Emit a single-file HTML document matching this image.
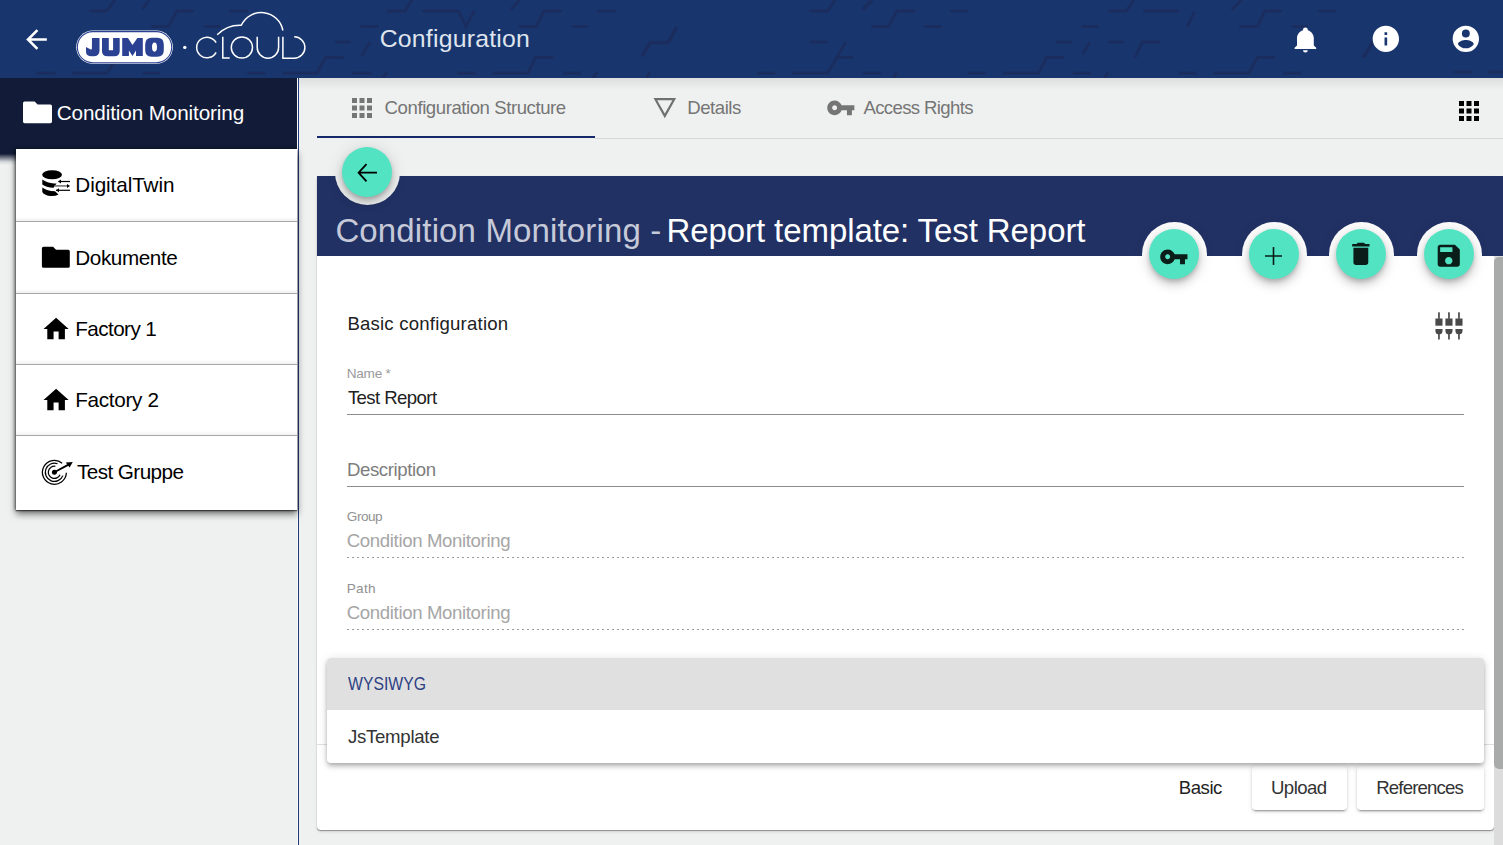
<!DOCTYPE html>
<html><head><meta charset="utf-8">
<style>
*{box-sizing:border-box}
html,body{margin:0;padding:0}
body{width:1503px;height:845px;overflow:hidden;position:relative;background:#eff1f0;font-family:"Liberation Sans",sans-serif}
.a{position:absolute}
.t{position:absolute;white-space:nowrap;line-height:1}
svg{display:block}
.fab{position:absolute;width:50px;height:50px;border-radius:50%;background:#52e3c2;box-shadow:0 3px 5px -1px rgba(0,0,0,.2),0 6px 10px 0 rgba(0,0,0,.14),0 1px 18px 0 rgba(0,0,0,.12)}
.halo{position:absolute;width:65px;height:65px;border-radius:50%;background:#fff}
</style></head><body>
<div class="a" style="left:0;top:0;width:1503px;height:78px;background:#18366d;overflow:hidden">
<svg class="a" style="left:0;top:0" width="1503" height="78"><g fill="none" stroke="#1b2d5e" stroke-width="2.8" stroke-linejoin="miter"><polyline points="89.5,11 106.5,11 115,0"/><polyline points="142.7,9 149,0"/><polyline points="151,26.5 168.5,26.5 177,11 194,11"/><polyline points="36.2,73 55.4,73"/><polyline points="72.4,73 106.5,73 113,64"/><polyline points="142.7,73 160,73"/><polyline points="229.2,11 247.3,11"/><polyline points="203.7,26.5 220.7,26.5"/><polyline points="247.3,73 265.4,73"/><polyline points="282.5,73 317,73 325.5,57.5 343.5,57.5"/><polyline points="387,11 405.2,11 411.6,0"/><polyline points="422.2,11 458.4,11 465.9,26.5 474.4,10.6"/><polyline points="360.5,26.5 378.6,26.5"/><polyline points="335,42 350.9,42"/><polyline points="370,42.6 361.5,55.4"/><polyline points="352,73 371.1,73"/><polyline points="382.8,78 387,72.4"/><polyline points="457.4,73 475.5,73"/><polyline points="510.9,9.6 519.4,0"/><polyline points="518.9,26.5 536.4,26.5 543.9,11 562,11"/><polyline points="571.6,26.5 588.6,26.5"/><polyline points="597.1,11 615.3,11"/><polyline points="492.8,73 527.9,73 535.4,57.5 553.5,57.5"/><polyline points="563,73 581.2,73"/><polyline points="592.9,78 597.1,72.4"/><polyline points="642.1,56.4 650.1,42.6 668.2,42.6 676.7,27.2" stroke-width="3.5"/><polyline points="649.6,72.4 646.4,78"/><polyline points="757.1,73 775.2,73"/><polyline points="792.3,73 827.7,73 845.8,42"/><polyline points="809.6,11 827.7,11 835.1,0"/><polyline points="862.8,9.6 872.4,0" stroke-width="3.5"/><polyline points="871.4,26.5 888.4,26.5 896.9,11 915,11"/><polyline points="923.5,26.5 941.6,26.5"/><polyline points="950.2,11 967.5,11"/><polyline points="809.6,42 827.7,42"/><polyline points="837.3,57.5 853.2,57.5"/><polyline points="862.8,73 880.9,73"/><polyline points="893.7,78 896.9,72.4"/><polyline points="1108,11 1126.4,11 1133.8,0"/><polyline points="1081.4,26.5 1098.4,26.5"/><polyline points="1089.9,42.6 1082.5,54.3"/><polyline points="1055.8,42 1071.8,42"/><polyline points="1108,42 1124,42"/><polyline points="1002.6,73 1038.8,73 1046.3,57.5 1064.4,57.5"/><polyline points="967.5,73 985.6,73"/><polyline points="1072.9,73 1091,73"/><polyline points="1108,72.4 1104.8,78"/><polyline points="1143.4,11 1178.6,11"/><polyline points="1194.5,11.7 1187.1,26.6"/><polyline points="1241.4,0 1231.8,9.6"/><polyline points="1239.3,26.5 1257.4,26.5 1264.8,11 1282,11"/><polyline points="1160.5,42 1142.4,42 1134.9,57.5"/><polyline points="1213.7,73 1248.9,73 1257.4,57.5 1274.4,57.5"/><polyline points="1178.6,73 1196.7,73"/><polyline points="1318.3,11 1335.4,11"/><polyline points="1291.7,26.5 1307.7,26.5"/><polyline points="1373.7,40.5 1363.1,57.5" stroke-width="3.5"/><polyline points="1283.2,73 1301.3,73"/><polyline points="1453.6,72 1472,72"/><polyline points="1488.6,72 1503,72"/></g></svg>
</div>
<svg class="a" style="left:20.5px;top:23.7px" width="31" height="31" viewBox="0 0 24 24"><path fill="#fff" d="M20 11H7.83l5.59-5.59L12 4l-8 8 8 8 1.41-1.41L7.83 13H20v-2z" /></svg>
<svg class="a" style="left:0;top:0" width="320" height="78" viewBox="0 0 320 78">
<rect x="76.2" y="30.5" width="96.7" height="33.3" rx="16.65" fill="#fff"/>
<rect x="77.35" y="31.6" width="94.4" height="31.1" rx="15.55" fill="#fff" stroke="#2b4192" stroke-width="1.1"/>
<g fill="#2b4192">
<path d="M92,38 H99.5 V50.5 Q99.5,56.3 93.5,56.3 H91.5 Q86,56.3 86,51.5 V46.9 L90.2,49.3 Q91.9,50 91.9,48.5 Z"/>
<path d="M102,38 H108.8 V50.2 H113.1 V38 H119.7 V51.2 Q119.7,56.3 114.2,56.3 H107.5 Q102,56.3 102,51.2 Z"/>
<path d="M122.2,38 H128 L132.5,45 L137.4,38 H142.8 V55.9 H136 V50.6 L132.5,55.9 L128.9,50.6 V55.9 H122.2 Z"/>
<path fill-rule="evenodd" d="M151.7,37.8 H157.3 Q163.8,37.8 163.8,44.3 V50.2 Q163.8,56.7 157.3,56.7 H151.7 Q145.2,56.7 145.2,50.2 V44.3 Q145.2,37.8 151.7,37.8 Z M154.5,42.5 Q152,42.5 152,47.1 Q152,51.7 154.5,51.7 Q157,51.7 157,47.1 Q157,42.5 154.5,42.5 Z"/>
</g>
<circle cx="184.8" cy="47.4" r="1.7" fill="#fff"/>
<g fill="none" stroke="#fff" stroke-width="1.5">
<path d="M216.1,42.7 A10.3,10.3 0 1 0 216.1,52.3"/>
<path d="M222.8,36.8 V58 H229.7"/>
<circle cx="241.9" cy="47.5" r="10.6"/>
<path d="M257.2,36.8 V47.5 A10.7,10.7 0 0 0 278.6,47.5 V36.8"/>
<path d="M282.9,36.8 V58.2 H294.2 A10.7,10.7 0 0 0 294.2,36.8"/>
<path d="M217.2,34.8 A32,32 0 0 1 241.3,25.3 A22,22 0 0 1 282.9,30.5"/>
</g>
</svg>
<div class="t" style="left:379.7px;top:26.9px;font-size:24.8px;letter-spacing:0.225px;color:#dfe4ee;">Configuration</div>
<svg class="a" style="left:1291.3px;top:24.5px" width="28.8" height="28.8" viewBox="0 0 24 24"><path fill="#fff" d="M21,19V20H3V19L5,17V11C5,7.9 7.03,5.17 10,4.29C10,4.19 10,4.1 10,4A2,2 0 0,1 12,2A2,2 0 0,1 14,4C14,4.1 14,4.19 14,4.29C16.97,5.17 19,7.9 19,11V17L21,19M14,21A2,2 0 0,1 12,23A2,2 0 0,1 10,21" /></svg>
<svg class="a" style="left:1370.2px;top:23.4px" width="31.7" height="31.7" viewBox="0 0 24 24"><path fill="#fff" d="M12 2C6.48 2 2 6.48 2 12s4.48 10 10 10 10-4.48 10-10S17.52 2 12 2zm1 15h-2v-6h2v6zm0-8h-2V7h2v2z" /></svg>
<svg class="a" style="left:1450.3px;top:23.4px" width="31.7" height="31.7" viewBox="0 0 24 24"><path fill="#fff" d="M12,19.2C9.5,19.2 7.29,17.92 6,16C6.03,14 10,12.9 12,12.9C14,12.9 17.97,14 18,16C16.71,17.92 14.5,19.2 12,19.2M12,5A3,3 0 0,1 15,8A3,3 0 0,1 12,11A3,3 0 0,1 9,8A3,3 0 0,1 12,5M12,2A10,10 0 0,0 2,12A10,10 0 0,0 12,22A10,10 0 0,0 22,12C22,6.47 17.5,2 12,2Z" /></svg>
<div class="a" style="left:299px;top:78px;width:1204px;height:12px;background:linear-gradient(rgba(0,0,0,.08),rgba(0,0,0,0))"></div>
<div class="a" style="left:298px;top:78px;width:1px;height:767px;background:#223a78"></div>
<div class="a" style="left:297px;top:78px;width:1px;height:767px;background:#fafafa"></div>
<div class="a" style="left:0;top:78px;width:297px;height:71px;background:#121c38;"></div>
<div class="a" style="left:0;top:149px;width:297px;height:16px;background:linear-gradient(#121c38 0,#131d39 30%,rgba(18,28,56,.55) 55%,rgba(18,28,56,.12) 80%,rgba(18,28,56,0) 100%)"></div>
<svg class="a" style="left:0;top:0;overflow:visible" width="1" height="1"><path fill="#fff" d="M24.6,101.5 H34.6 L37.638000000000005,104.538 H50.4 Q52,104.538 52,106.13799999999999 V121.60000000000001 Q52,123.2 50.4,123.2 H24.6 Q23,123.2 23,121.60000000000001 V103.1 Q23,101.5 24.6,101.5 Z"/></svg>
<div class="t" style="left:56.8px;top:103.0px;font-size:20.7px;letter-spacing:-0.126px;color:#fff;">Condition Monitoring</div>
<div class="a" style="left:16px;top:149px;width:281px;height:361px;background:#fff;box-shadow:0 1px 1px rgba(0,0,0,.45),0 4px 7px rgba(0,0,0,.55),-1px 0 3px rgba(0,0,0,.5)"></div>
<div class="a" style="left:16px;top:217px;width:281px;height:4px;background:linear-gradient(rgba(0,0,0,0),rgba(0,0,0,.06))"></div>
<div class="a" style="left:16px;top:221px;width:281px;height:1px;background:#a8a8a8"></div>
<div class="a" style="left:16px;top:289px;width:281px;height:4px;background:linear-gradient(rgba(0,0,0,0),rgba(0,0,0,.06))"></div>
<div class="a" style="left:16px;top:293px;width:281px;height:1px;background:#a8a8a8"></div>
<div class="a" style="left:16px;top:360px;width:281px;height:4px;background:linear-gradient(rgba(0,0,0,0),rgba(0,0,0,.06))"></div>
<div class="a" style="left:16px;top:364px;width:281px;height:1px;background:#a8a8a8"></div>
<div class="a" style="left:16px;top:431px;width:281px;height:4px;background:linear-gradient(rgba(0,0,0,0),rgba(0,0,0,.06))"></div>
<div class="a" style="left:16px;top:435px;width:281px;height:1px;background:#a8a8a8"></div>
<svg class="a" style="left:0;top:0;overflow:visible" width="1" height="1">
<ellipse cx="52.1" cy="174.7" rx="9.9" ry="4.5" fill="#000"/>
<path d="M42.3,179.5 Q47,183 54,183.6 L56.5,183.6 L53.5,187.8 Q46,187.5 42.3,184.5 Z" fill="#000"/>
<path d="M42.3,187.5 Q47,191 55,191.2 L58.5,194.5 Q55,196.5 50,196 Q44,195 42.3,192 Z" fill="#000"/>
<g stroke="#000" stroke-width="1.2" fill="none"><path d="M58.5,181.5 H70"/><path d="M56,190.3 H70"/></g>
<path d="M54.5,185.9 H67" stroke="#777" stroke-width="1.6"/>
<path d="M58,181.5 l3,-2 v4 z M56,190.3 l3,-2 v4 z M70,185.9 l-3,-2 v4 z" fill="#000"/>
</svg>
<div class="t" style="left:75.3px;top:174.7px;font-size:20.7px;letter-spacing:-0.09px;color:#000;">DigitalTwin</div>
<svg class="a" style="left:0;top:0;overflow:visible" width="1" height="1"><path fill="#000" d="M43.5,246.7 H53.06 L56.014,249.654 H68.2 Q69.8,249.654 69.8,251.254 V266.2 Q69.8,267.8 68.2,267.8 H43.5 Q41.9,267.8 41.9,266.2 V248.29999999999998 Q41.9,246.7 43.5,246.7 Z"/></svg>
<div class="t" style="left:75.3px;top:248.0px;font-size:20.7px;letter-spacing:-0.412px;color:#000;">Dokumente</div>
<svg class="a" style="left:40.8px;top:314.1px" width="30.2" height="30.2" viewBox="0 0 24 24"><path fill="#000" d="M10 20v-6h4v6h5v-8h3L12 3 2 12h3v8z" /></svg>
<div class="t" style="left:75.3px;top:319.0px;font-size:20.7px;letter-spacing:-0.588px;color:#000;">Factory 1</div>
<svg class="a" style="left:40.8px;top:385.2px" width="30.2" height="30.2" viewBox="0 0 24 24"><path fill="#000" d="M10 20v-6h4v6h5v-8h3L12 3 2 12h3v8z" /></svg>
<div class="t" style="left:75.3px;top:389.9px;font-size:20.7px;letter-spacing:-0.312px;color:#000;">Factory 2</div>
<svg class="a" style="left:0;top:0;overflow:visible" width="1" height="1">
<g fill="none" stroke="#000" stroke-width="1.25">
<path d="M62.18,463.16 A12.0,12.0 0 1 0 66.39,472.83"/>
<path d="M57.55,463.76 A9.1,9.1 0 1 0 62.88,475.61"/>
<path d="M55.39,466.28 A6.1,6.1 0 1 0 60.01,474.69"/>
</g>
<circle cx="54.4" cy="472.3" r="2.5" fill="#000"/>
<path d="M54.4,472.3 L68.5,464.6" stroke="#000" stroke-width="1.8"/>
<path d="M72.8,462 L65.8,462.4 L69.6,467.4 Z" fill="#000"/>
</svg>
<div class="t" style="left:77.0px;top:461.6px;font-size:20.7px;letter-spacing:-0.57px;color:#000;">Test Gruppe</div>
<div class="a" style="left:595px;top:138px;width:908px;height:1px;background:#d5d8d8"></div>
<div class="a" style="left:317px;top:136px;width:278px;height:2px;background:#14286a"></div>
<svg class="a" style="left:347px;top:93px" width="30" height="30" viewBox="0 0 24 24"><path fill="#757575" d="M4 8h4V4H4v4zm6 12h4v-4h-4v4zm-6 0h4v-4H4v4zm0-6h4v-4H4v4zm6 0h4v-4h-4v4zm6-10v4h4V4h-4zm-6 4h4V4h-4v4zm6 6h4v-4h-4v4zm0 6h4v-4h-4v4z" /></svg>
<div class="t" style="left:384.6px;top:99.0px;font-size:18.6px;letter-spacing:-0.436px;color:#757575;">Configuration Structure</div>
<svg class="a" style="left:0;top:0;overflow:visible" width="1" height="1"><path d="M655.4,99.2 H674.2 L664.8,115.9 Z" fill="none" stroke="#707070" stroke-width="2.2" stroke-linejoin="miter"/></svg>
<div class="t" style="left:687.3px;top:99.0px;font-size:18.6px;letter-spacing:-0.483px;color:#757575;">Details</div>
<svg class="a" style="left:825.7px;top:93.3px" width="29.6" height="29.6" viewBox="0 0 24 24"><path fill="#757575" d="M12.65 10C11.83 7.67 9.61 6 7 6c-3.31 0-6 2.69-6 6s2.69 6 6 6c2.61 0 4.83-1.67 5.65-4H17v4h4v-4h2v-4H12.65zM7 14c-1.1 0-2-.9-2-2s.9-2 2-2 2 .9 2 2-.9 2-2 2z" /></svg>
<div class="t" style="left:863.4px;top:99.1px;font-size:18.6px;letter-spacing:-0.633px;color:#757575;">Access Rights</div>
<svg class="a" style="left:1453.6px;top:96px" width="30" height="30" viewBox="0 0 24 24"><path fill="#000" d="M4 8h4V4H4v4zm6 12h4v-4h-4v4zm-6 0h4v-4H4v4zm0-6h4v-4H4v4zm6 0h4v-4h-4v4zm6-10v4h4V4h-4zm-6 4h4V4h-4v4zm6 6h4v-4h-4v4zm0 6h4v-4h-4v4z" /></svg>
<div class="a" style="left:317px;top:176px;width:1177px;height:654px;background:#fff;border-radius:0 0 4px 4px;box-shadow:0 1.5px 1px -0.5px rgba(0,0,0,.35),0 2px 4px -1px rgba(0,0,0,.14),0 0 1px rgba(0,0,0,.08)"></div>
<div class="a" style="left:317px;top:176px;width:1186px;height:80px;background:#213164"></div>
<div class="t" style="left:335.4px;top:213.7px;font-size:33px;letter-spacing:0.143px;color:#c6cad8;">Condition Monitoring -</div>
<div class="t" style="left:666.5px;top:213.9px;font-size:33px;letter-spacing:-0.085px;color:#fff;">Report template: Test Report</div>
<div class="halo" style="left:334.5px;top:139.5px;background:#eff1f0"></div>
<div class="fab" style="left:342px;top:147px"></div>
<svg class="a" style="left:0;top:0;overflow:visible" width="1" height="1"><path d="M377,172.7 H359.5 M366.5,164.2 L358.6,172.7 L366.5,181.3" fill="none" stroke="#000" stroke-width="1.8"/></svg>
<div class="halo" style="left:1141.5px;top:221.5px"></div>
<div class="halo" style="left:1241.5px;top:221.5px"></div>
<div class="halo" style="left:1328.5px;top:221.5px"></div>
<div class="halo" style="left:1416.5px;top:221.5px"></div>
<div class="fab" style="left:1149px;top:229px"></div>
<div class="fab" style="left:1249px;top:229px"></div>
<div class="fab" style="left:1336px;top:229px"></div>
<div class="fab" style="left:1424px;top:229px"></div>
<svg class="a" style="left:1158.8px;top:241.5px" width="29.7" height="29.7" viewBox="0 0 24 24"><path fill="#0b1d18" d="M12.65 10C11.83 7.67 9.61 6 7 6c-3.31 0-6 2.69-6 6s2.69 6 6 6c2.61 0 4.83-1.67 5.65-4H17v4h4v-4h2v-4H12.65zM7 14c-1.1 0-2-.9-2-2s.9-2 2-2 2 .9 2 2-.9 2-2 2z" /></svg>
<svg class="a" style="left:0;top:0;overflow:visible" width="1" height="1"><path d="M1265,256 H1282 M1273.5,247 V265" stroke="#0b1d18" stroke-width="1.6"/></svg>
<svg class="a" style="left:1346px;top:239.3px" width="29.7" height="29.7" viewBox="0 0 24 24"><path fill="#0b1d18" d="M6 19c0 1.1.9 2 2 2h8c1.1 0 2-.9 2-2V7H6v12zM19 4h-3.5l-1-1h-5l-1 1H5v2h14V4z" /></svg>
<svg class="a" style="left:1433.9px;top:241.3px" width="29.5" height="29.5" viewBox="0 0 24 24"><path fill="#0b1d18" d="M17 3H5c-1.11 0-2 .9-2 2v14c0 1.1.89 2 2 2h14c1.1 0 2-.9 2-2V7l-4-4zm-5 16c-1.66 0-3-1.34-3-3s1.34-3 3-3 3 1.34 3 3-1.34 3-3 3zm3-10H5V5h10v4z" /></svg>
<svg class="a" style="left:0;top:0;overflow:visible" width="1" height="1"><g fill="#494949"><rect x="1438.1000000000001" y="312.3" width="1.7" height="6.5" /><rect x="1435.4" y="318.5" width="7.1" height="7.2"/><path d="M1435.4,328.9 H1442.5 V330.5 Q1442.5,334 1439.8,334.2 V339.5 H1438.1000000000001 V334.2 Q1435.4,334 1435.4,330.5 Z"/><rect x="1448.1100000000001" y="312.3" width="1.7" height="6.5" /><rect x="1445.41" y="318.5" width="7.1" height="7.2"/><path d="M1445.41,328.9 H1452.51 V330.5 Q1452.51,334 1449.81,334.2 V339.5 H1448.1100000000001 V334.2 Q1445.41,334 1445.41,330.5 Z"/><rect x="1458.1200000000001" y="312.3" width="1.7" height="6.5" /><rect x="1455.42" y="318.5" width="7.1" height="7.2"/><path d="M1455.42,328.9 H1462.52 V330.5 Q1462.52,334 1459.82,334.2 V339.5 H1458.1200000000001 V334.2 Q1455.42,334 1455.42,330.5 Z"/></g></svg>
<div class="t" style="left:347.4px;top:315.4px;font-size:18.6px;letter-spacing:0.2px;color:#212121;">Basic configuration</div>
<div class="t" style="left:346.7px;top:366.6px;font-size:13.6px;letter-spacing:-0.24px;color:#9a9a9a;">Name *</div>
<div class="t" style="left:347.9px;top:388.9px;font-size:18.6px;letter-spacing:-0.59px;color:#212121;">Test Report</div>
<div class="a" style="left:347px;top:414px;width:1117px;height:1px;background:#8c8c8c"></div>
<div class="t" style="left:346.9px;top:461.0px;font-size:18.6px;letter-spacing:-0.39px;color:#7d7d7d;">Description</div>
<div class="a" style="left:347px;top:486px;width:1117px;height:1px;background:#8c8c8c"></div>
<div class="t" style="left:346.8px;top:509.6px;font-size:13.6px;letter-spacing:-0.475px;color:#919191;">Group</div>
<div class="t" style="left:346.8px;top:531.9px;font-size:18.6px;letter-spacing:-0.358px;color:#a6a6a6;">Condition Monitoring</div>
<div class="a" style="left:347px;top:557px;width:1117px;height:1px;background:linear-gradient(90deg,#9a9a9a 0 2px,transparent 2px 5px);background-size:5px 1px"></div>
<div class="t" style="left:346.8px;top:581.7px;font-size:13.6px;letter-spacing:0.233px;color:#919191;">Path</div>
<div class="t" style="left:346.8px;top:603.7px;font-size:18.6px;letter-spacing:-0.358px;color:#a6a6a6;">Condition Monitoring</div>
<div class="a" style="left:347px;top:629px;width:1117px;height:1px;background:linear-gradient(90deg,#9a9a9a 0 2px,transparent 2px 5px);background-size:5px 1px"></div>
<div class="a" style="left:317px;top:744px;width:1177px;height:1px;background:#e0e0e0"></div>
<div class="t" style="left:1178.8px;top:779.0px;font-size:18.6px;letter-spacing:-0.475px;color:#222;">Basic</div>
<div class="a" style="left:1252px;top:766px;width:95px;height:44px;background:#fff;border-radius:4px;box-shadow:0 3px 1px -2px rgba(0,0,0,.2),0 2px 2px 0 rgba(0,0,0,.14),0 1px 5px 0 rgba(0,0,0,.12)"></div>
<div class="t" style="left:1271.0px;top:779.0px;font-size:18.6px;letter-spacing:-0.56px;color:#333;">Upload</div>
<div class="a" style="left:1357px;top:766px;width:127px;height:44px;background:#fff;border-radius:4px;box-shadow:0 3px 1px -2px rgba(0,0,0,.2),0 2px 2px 0 rgba(0,0,0,.14),0 1px 5px 0 rgba(0,0,0,.12)"></div>
<div class="t" style="left:1376.3px;top:779.0px;font-size:18.6px;letter-spacing:-0.856px;color:#333;">References</div>
<div class="a" style="left:327px;top:658px;width:1157px;height:105px;background:#fff;border-radius:4px;overflow:hidden;box-shadow:0 2px 4px -1px rgba(0,0,0,.2),0 4px 5px 0 rgba(0,0,0,.14),0 1px 10px 0 rgba(0,0,0,.12)"><div style="height:52px;background:#e0e0e0"></div></div>
<div class="t" style="left:348.0px;top:675.0px;font-size:18.6px;color:#2d4183;transform-origin:0 0;transform:scaleX(0.848)">WYSIWYG</div>
<div class="t" style="left:348.0px;top:728.3px;font-size:18.6px;letter-spacing:-0.278px;color:#333;">JsTemplate</div>
<div class="a" style="left:1494px;top:256px;width:9px;height:589px;background:#dcdcdc"></div>
<div class="a" style="left:1494px;top:257px;width:9px;height:512px;background:#a9abab;border-radius:5px 0 0 5px"></div>
</body></html>
